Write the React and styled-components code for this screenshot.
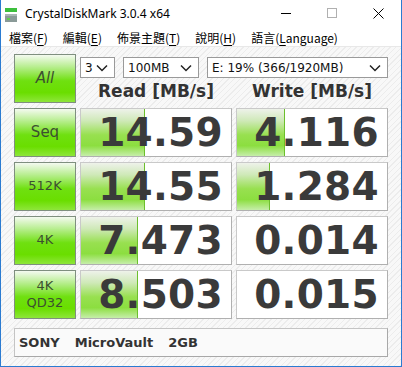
import { Fragment } from 'react'
import styled, { createGlobalStyle } from 'styled-components'

const GlobalStyle = createGlobalStyle`
  html, body { margin: 0; padding: 0; background: #ffffff; }
  * { box-sizing: border-box; }
`

const Window = styled.div`
  width: 402px;
  height: 367px;
  display: flex;
  flex-direction: column;
  border: 1px solid #2b7bd1;
  border-top: none;
  background: #ffffff;
  overflow: hidden;
`
const TitleBar = styled.div`
  height: 29px;
  display: flex;
  align-items: center;
  padding-left: 3px;
  font-family: "Noto Sans", "Open Sans", sans-serif;
  font-size: 12px;
  color: #000;
`
const TitleText = styled.span`
  margin-left: 7px;
  flex: 1;
  margin-top: -3px;
`
const Controls = styled.div`
  display: flex;
  align-items: center;
  height: 100%;
  margin-top: -3px;
`
const ControlBtn = styled.div`
  width: 46px;
  height: 100%;
  display: flex;
  align-items: center;
  justify-content: center;
`
const MenuBar = styled.div`
  height: 17px;
  display: flex;
  align-items: center;
  gap: 15px;
  padding-left: 8px;
  font-family: "Noto Sans CJK TC", "Noto Sans", sans-serif;
  font-size: 12px;
  color: #000;
`
const MenuItem = styled.span`
  u { text-underline-offset: 2px; }
`
const Client = styled.div`
  flex: 1;
  border-top: 1px solid #e8e8e8;
  padding: 7px 12px 0 13px;
  background-color: #f8f8f8;
  background-image: repeating-linear-gradient(135deg, #f8f8f8 0px, #f8f8f8 3px, #ececec 3px, #ececec 4px);
`
const Grid = styled.div`
  display: grid;
  grid-template-columns: 62px 152px 152px;
  grid-auto-rows: 49px;
  column-gap: 4px;
  row-gap: 5px;
`
const LabelBtn = styled.div`
  border: 1px solid #7f8f7f;
  background: linear-gradient(to bottom, #f4faf0 0%, #b8ee90 25%, #6fe010 55%, #6ade00 80%, #8ee63a 100%);
  display: flex;
  flex-direction: column;
  align-items: center;
  justify-content: center;
  font-family: "DejaVu Sans", Verdana, sans-serif;
  font-size: ${p => p.$big ? '15px' : '13px'};
  font-style: ${p => p.$italic ? 'italic' : 'normal'};
  line-height: 1.25;
  color: #3c5030;
`
const TopPanel = styled.div`
  grid-column: 2 / span 2;
  display: flex;
  flex-direction: column;
`
const SelectRow = styled.div`
  display: flex;
  gap: 8px;
  margin-top: 3px;
`
const Select = styled.div`
  width: ${p => p.$w}px;
  height: 21px;
  background: #fff;
  border: 1px solid #9a9a9a;
  display: flex;
  align-items: center;
  justify-content: space-between;
  padding: 0 6px 0 4px;
  font-family: "DejaVu Sans", Verdana, sans-serif;
  font-size: 12px;
  color: #111;
`
const Headers = styled.div`
  display: grid;
  grid-template-columns: 152px 152px;
  column-gap: 4px;
  margin-top: 3px;
`
const Header = styled.div`
  text-align: center;
  font-family: "DejaVu Sans", Verdana, sans-serif;
  font-weight: bold;
  font-size: 17px;
  color: #333;
`
const ValueBox = styled.div`
  position: relative;
  background: #fff;
  border: 1px solid #c9c9c9;
  border-right-color: #b0b0b0;
  border-bottom-color: #b0b0b0;
  display: flex;
  align-items: center;
  justify-content: flex-end;
  padding-right: 8px;
  overflow: hidden;
`
const Bar = styled.div`
  position: absolute;
  left: 0;
  top: 0;
  bottom: 0;
  background: linear-gradient(to bottom, #eef2ea 0%, #cfe9b8 25%, #98e050 55%, #8cde40 78%, #c6eeaa 100%);
  border-right: 1px solid #6cbf2c;
`
const Value = styled.span`
  position: relative;
  font-family: "DejaVu Sans", Verdana, sans-serif;
  font-weight: bold;
  font-size: 39px;
  letter-spacing: 0.3px;
  color: #3a3a3a;
  line-height: 1;
`
const InfoBar = styled.div`
  margin-top: 9px;
  width: 374px;
  height: 29px;
  background: #fafafa;
  border: 1px solid #c4c4c4;
  border-right-color: #a8a8a8;
  border-bottom-color: #a8a8a8;
  display: flex;
  align-items: center;
  gap: 15px;
  padding-left: 4px;
  font-family: "DejaVu Sans", Verdana, sans-serif;
  font-weight: bold;
  font-size: 13px;
  color: #333;
`

const Chevron = () => (
  <svg width="12" height="8" viewBox="0 0 12 8">
    <path d="M1 1.5 L6 6.5 L11 1.5" fill="none" stroke="#222" strokeWidth="1.5" />
  </svg>
)

const AppIcon = () => (
  <svg width="14" height="16" viewBox="0 0 14 16">
    <rect x="1" y="1" width="12" height="4" fill="#3cbf3c" />
    <rect x="1" y="7" width="12" height="8" fill="#8a9a98" />
    <rect x="1" y="7" width="12" height="2" fill="#a8b6b4" />
    <rect x="3" y="11" width="3" height="2" fill="#5fd04a" />
  </svg>
)

const rows = [
  { label: ['Seq'], big: true, read: '14.59', rw: 64, write: '4.116', ww: 48 },
  { label: ['512K'], read: '14.55', rw: 64, write: '1.284', ww: 33 },
  { label: ['4K'], read: '7.473', rw: 57, write: '0.014', ww: 0 },
  { label: ['4K', 'QD32'], read: '8.503', rw: 57, write: '0.015', ww: 0 },
]

const menus = [
  ['檔案(', 'F', ')'],
  ['編輯(', 'E', ')'],
  ['佈景主題(', 'T', ')'],
  ['說明(', 'H', ')'],
  ['語言(', 'L', 'anguage)'],
]

export default function App() {
  return (
    <>
      <GlobalStyle />
      <Window>
        <TitleBar>
          <AppIcon />
          <TitleText>CrystalDiskMark 3.0.4 x64</TitleText>
          <Controls>
            <ControlBtn>
              <svg width="10" height="10" viewBox="0 0 10 10"><path d="M0 5.5 H10" stroke="#000" strokeWidth="1" /></svg>
            </ControlBtn>
            <ControlBtn>
              <svg width="10" height="10" viewBox="0 0 10 10"><rect x="0.5" y="0.5" width="9" height="9" fill="none" stroke="#b0b0b0" strokeWidth="1" /></svg>
            </ControlBtn>
            <ControlBtn>
              <svg width="11" height="11" viewBox="0 0 11 11"><path d="M0.5 0.5 L10.5 10.5 M10.5 0.5 L0.5 10.5" stroke="#000" strokeWidth="1" /></svg>
            </ControlBtn>
          </Controls>
        </TitleBar>
        <MenuBar>
          {menus.map(([a, k, b]) => (
            <MenuItem key={a}>{a}<u>{k}</u>{b}</MenuItem>
          ))}
        </MenuBar>
        <Client>
          <Grid>
            <LabelBtn $big $italic>All</LabelBtn>
            <TopPanel>
              <SelectRow>
                <Select $w={35}><span>3</span><Chevron /></Select>
                <Select $w={76}><span>100MB</span><Chevron /></Select>
                <Select $w={181}><span>E: 19% (366/1920MB)</span><Chevron /></Select>
              </SelectRow>
              <Headers>
                <Header>Read [MB/s]</Header>
                <Header>Write [MB/s]</Header>
              </Headers>
            </TopPanel>
            {rows.map(r => (
              <Fragment key={r.read}>
                <LabelBtn $big={r.big}>
                  {r.label.map(t => <span key={t}>{t}</span>)}
                </LabelBtn>
                <ValueBox>
                  {r.rw > 0 && <Bar style={{ width: r.rw }} />}
                  <Value>{r.read}</Value>
                </ValueBox>
                <ValueBox>
                  {r.ww > 0 && <Bar style={{ width: r.ww }} />}
                  <Value>{r.write}</Value>
                </ValueBox>
              </Fragment>
            ))}
          </Grid>
          <InfoBar>
            <span>SONY</span>
            <span>MicroVault</span>
            <span>2GB</span>
          </InfoBar>
        </Client>
      </Window>
    </>
  )
}
